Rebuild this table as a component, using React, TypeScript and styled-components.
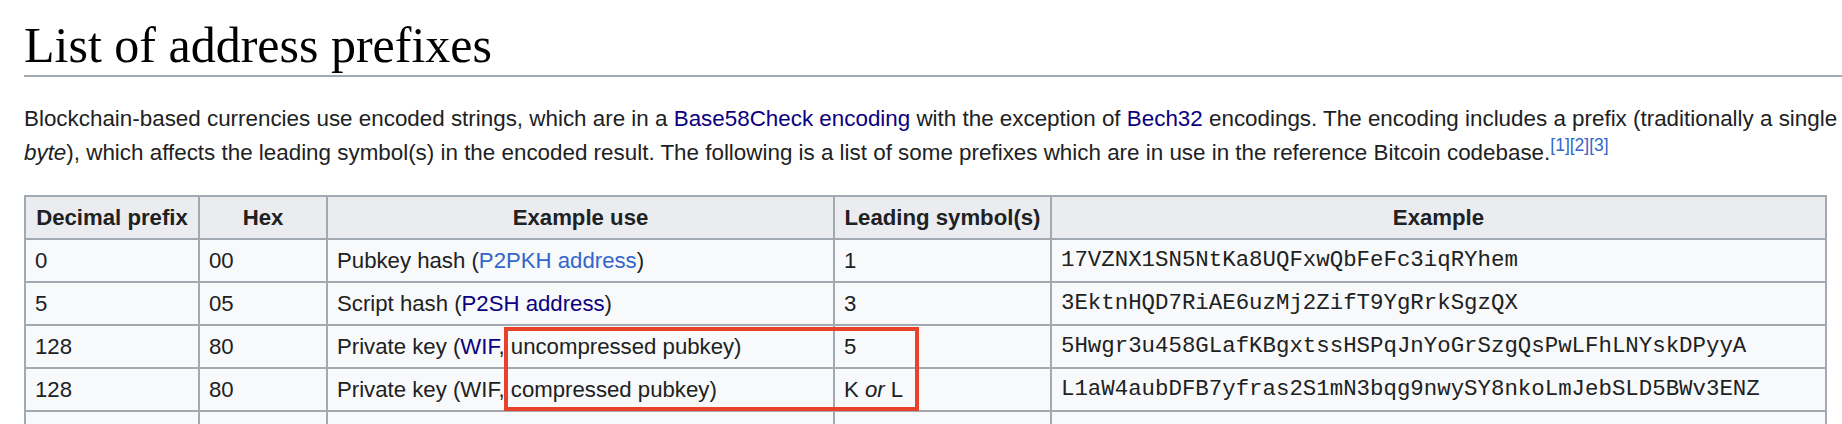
import React from "react";
import styled, { createGlobalStyle } from "styled-components";

const GlobalStyle = createGlobalStyle`
  html, body { margin: 0; padding: 0; background: #ffffff; }
  body {
    overflow: hidden;
    color: #202122;
    font-family: "Liberation Sans", Arial, Helvetica, sans-serif;
  }
`;

const Page = styled.main`
  padding-left: 24px;
  width: 1818px;
`;

const Heading = styled.h2`
  margin: 15px 0 0;
  padding: 0;
  font-family: "Liberation Serif", "Times New Roman", serif;
  font-weight: normal;
  font-size: 50px;
  line-height: 60px;
  color: #000000;
  border-bottom: 2px solid #a2a9b1;
`;

const Para = styled.p`
  margin: 25px 0 0;
  font-size: 22.4px;
  line-height: 34px;
  white-space: nowrap;
`;

const Link = styled.a<{ $visited?: boolean }>`
  color: ${(p) => (p.$visited ? "#0b0080" : "#3366cc")};
  text-decoration: none;
`;

const Ref = styled.sup`
  font-size: 17.5px;
  line-height: 1;
  vertical-align: 9px;
  color: #3366cc;
`;

const TableWrap = styled.div`
  position: relative;
  margin-top: 25px;
  width: 1801px;
`;

const Table = styled.table`
  border-collapse: collapse;
  table-layout: fixed;
  width: 1801px;
  background: #f8f9fa;
  color: #202122;
  font-size: 22.2px;
`;

const Th = styled.th`
  background: #eaecf0;
  border: 2px solid #a2a9b1;
  padding: 4px 9px;
  line-height: 33px;
  font-weight: bold;
  text-align: center;
`;

const Td = styled.td<{ $mono?: boolean }>`
  border: 2px solid #a2a9b1;
  padding: 4px 9px;
  line-height: 33px;
  text-align: left;
  white-space: nowrap;
  font-family: ${(p) =>
    p.$mono ? '"Liberation Mono", "Courier New", monospace' : "inherit"};
  font-size: ${(p) => (p.$mono ? "22.4px" : "inherit")};
`;

const Highlight = styled.div`
  position: absolute;
  left: 480px;
  top: 132px;
  width: 415px;
  height: 84px;
  box-sizing: border-box;
  border: 4px solid #e8412c;
  pointer-events: none;
`;

type Row = {
  dec: string;
  hex: string;
  use: React.ReactNode;
  lead: React.ReactNode;
  example: string;
};

const rows: Row[] = [
  {
    dec: "0",
    hex: "00",
    use: (
      <>
        Pubkey hash (<Link href="#">P2PKH address</Link>)
      </>
    ),
    lead: "1",
    example: "17VZNX1SN5NtKa8UQFxwQbFeFc3iqRYhem",
  },
  {
    dec: "5",
    hex: "05",
    use: (
      <>
        Script hash (<Link href="#" $visited>P2SH address</Link>)
      </>
    ),
    lead: "3",
    example: "3EktnHQD7RiAE6uzMj2ZifT9YgRrkSgzQX",
  },
  {
    dec: "128",
    hex: "80",
    use: (
      <>
        Private key (<Link href="#" $visited>WIF</Link>, uncompressed pubkey)
      </>
    ),
    lead: "5",
    example: "5Hwgr3u458GLafKBgxtssHSPqJnYoGrSzgQsPwLFhLNYskDPyyA",
  },
  {
    dec: "128",
    hex: "80",
    use: <>Private key (WIF, compressed pubkey)</>,
    lead: (
      <>
        K <i>or</i> L
      </>
    ),
    example: "L1aW4aubDFB7yfras2S1mN3bqg9nwySY8nkoLmJebSLD5BWv3ENZ",
  },
  {
    dec: "\u00a0",
    hex: "\u00a0",
    use: "\u00a0",
    lead: "\u00a0",
    example: "\u00a0",
  },
];

export default function App() {
  return (
    <>
      <GlobalStyle />
      <Page>
        <Heading>List of address prefixes</Heading>
        <Para>
          Blockchain-based currencies use encoded strings, which are in a{" "}
          <Link href="#" $visited>Base58Check encoding</Link> with the exception of{" "}
          <Link href="#" $visited>Bech32</Link> encodings. The encoding includes a
          prefix (traditionally a single
          <br />
          <i>byte</i>), which affects the leading symbol(s) in the encoded result.
          The following is a list of some prefixes which are in use in the
          reference Bitcoin codebase.
          <Ref>[1]</Ref>
          <Ref>[2]</Ref>
          <Ref>[3]</Ref>
        </Para>
        <TableWrap>
          <Table>
            <colgroup>
              <col style={{ width: 174 }} />
              <col style={{ width: 128 }} />
              <col style={{ width: 507 }} />
              <col style={{ width: 217 }} />
              <col style={{ width: 775 }} />
            </colgroup>
            <thead>
              <tr>
                <Th>Decimal prefix</Th>
                <Th>Hex</Th>
                <Th>Example use</Th>
                <Th>Leading symbol(s)</Th>
                <Th>Example</Th>
              </tr>
            </thead>
            <tbody>
              {rows.map((r, i) => (
                <tr key={i}>
                  <Td>{r.dec}</Td>
                  <Td>{r.hex}</Td>
                  <Td>{r.use}</Td>
                  <Td>{r.lead}</Td>
                  <Td $mono>{r.example}</Td>
                </tr>
              ))}
            </tbody>
          </Table>
          <Highlight />
        </TableWrap>
      </Page>
    </>
  );
}
